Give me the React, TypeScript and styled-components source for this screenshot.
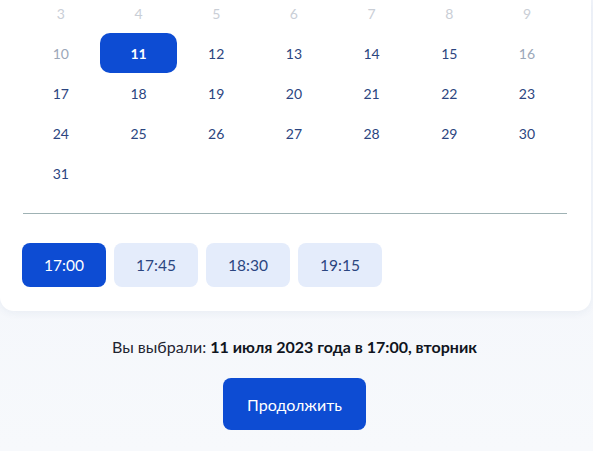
import styled, { createGlobalStyle } from "styled-components";

const GlobalStyle = createGlobalStyle`
  html, body {
    margin: 0;
    padding: 0;
  }
  body {
    background: linear-gradient(180deg, #f1f4fa 0%, #f7f9fc 100%);
    font-family: Lato, "Noto Sans", "Liberation Sans", sans-serif;
    min-height: 451px;
  }
`;

type Day = { n: number; kind: "faded" | "muted" | "normal" | "selected" };

const days: Day[] = [
  ...[3, 4, 5, 6, 7, 8, 9].map((n) => ({ n, kind: "faded" as const })),
  { n: 10, kind: "muted" },
  { n: 11, kind: "selected" },
  ...[12, 13, 14, 15].map((n) => ({ n, kind: "normal" as const })),
  { n: 16, kind: "muted" },
  ...Array.from({ length: 15 }, (_, i) => ({ n: 17 + i, kind: "normal" as const })),
];

const times = ["17:00", "17:45", "18:30", "19:15"];

function App(): JSX.Element {
  return (
    <Page>
      <GlobalStyle />
      <Card>
        <Grid>
          {days.map((d) => (
            <DayCell key={d.n} kind={d.kind}>{d.n}</DayCell>
          ))}
        </Grid>
        <Divider />
        <Times>
          {times.map((t, i) => (
            <TimeButton key={t} active={i === 0}>{t}</TimeButton>
          ))}
        </Times>
      </Card>
      <Summary>
        Вы выбрали: <b>11 июля 2023 года в 17:00, вторник</b>
      </Summary>
      <Continue>Продолжить</Continue>
    </Page>
  );
}

const Page = styled.div`
  display: flex;
  flex-direction: column;
  align-items: center;
  padding-right: 4px;
`;

const Card = styled.div`
  box-sizing: border-box;
  width: 591px;
  align-self: flex-start;
  background: #ffffff;
  border-radius: 0 0 14px 14px;
  box-shadow: 0 2px 8px rgba(30, 60, 120, 0.06);
  padding: 0 24px 24px 22px;
`;

const Grid = styled.div`
  display: grid;
  grid-template-columns: repeat(7, 77.7px);
  grid-auto-rows: 40px;
  margin-top: -7px;
`;

const dayColor = {
  faded: "#c9ced6",
  muted: "#9ba7b9",
  normal: "#2b4580",
  selected: "#ffffff",
};

const DayCell = styled.div<{ kind: Day["kind"] }>`
  display: flex;
  align-items: center;
  justify-content: center;
  font-size: 14px;
  font-weight: ${(p) => (p.kind === "selected" ? 700 : 400)};
  color: ${(p) => dayColor[p.kind]};
  background: ${(p) => (p.kind === "selected" ? "#0d4cd3" : "transparent")};
  border-radius: 10px;
`;

const Divider = styled.div`
  height: 1px;
  background: #9fb2b4;
  margin: 20px 0 0 1px;
  width: 544px;
`;

const Times = styled.div`
  display: flex;
  gap: 8px;
  margin: 29px 0 0 0;
`;

const TimeButton = styled.div<{ active: boolean }>`
  width: 84px;
  height: 44px;
  border-radius: 8px;
  display: flex;
  align-items: center;
  justify-content: center;
  font-size: 15.5px;
  color: ${(p) => (p.active ? "#ffffff" : "#2b4580")};
  background: ${(p) => (p.active ? "#0d4cd3" : "#e4ecfb")};
`;

const Summary = styled.div`
  margin-top: 26px;
  font-size: 16px;
  color: #1f2430;
  b {
    font-weight: 700;
    color: #0f1420;
  }
`;

const Continue = styled.button`
  margin-top: 22px;
  width: 143px;
  height: 52px;
  border: none;
  border-radius: 8px;
  background: #0d4cd3;
  color: #ffffff;
  font-family: inherit;
  font-size: 16px;
  cursor: pointer;
`;

export default App;
